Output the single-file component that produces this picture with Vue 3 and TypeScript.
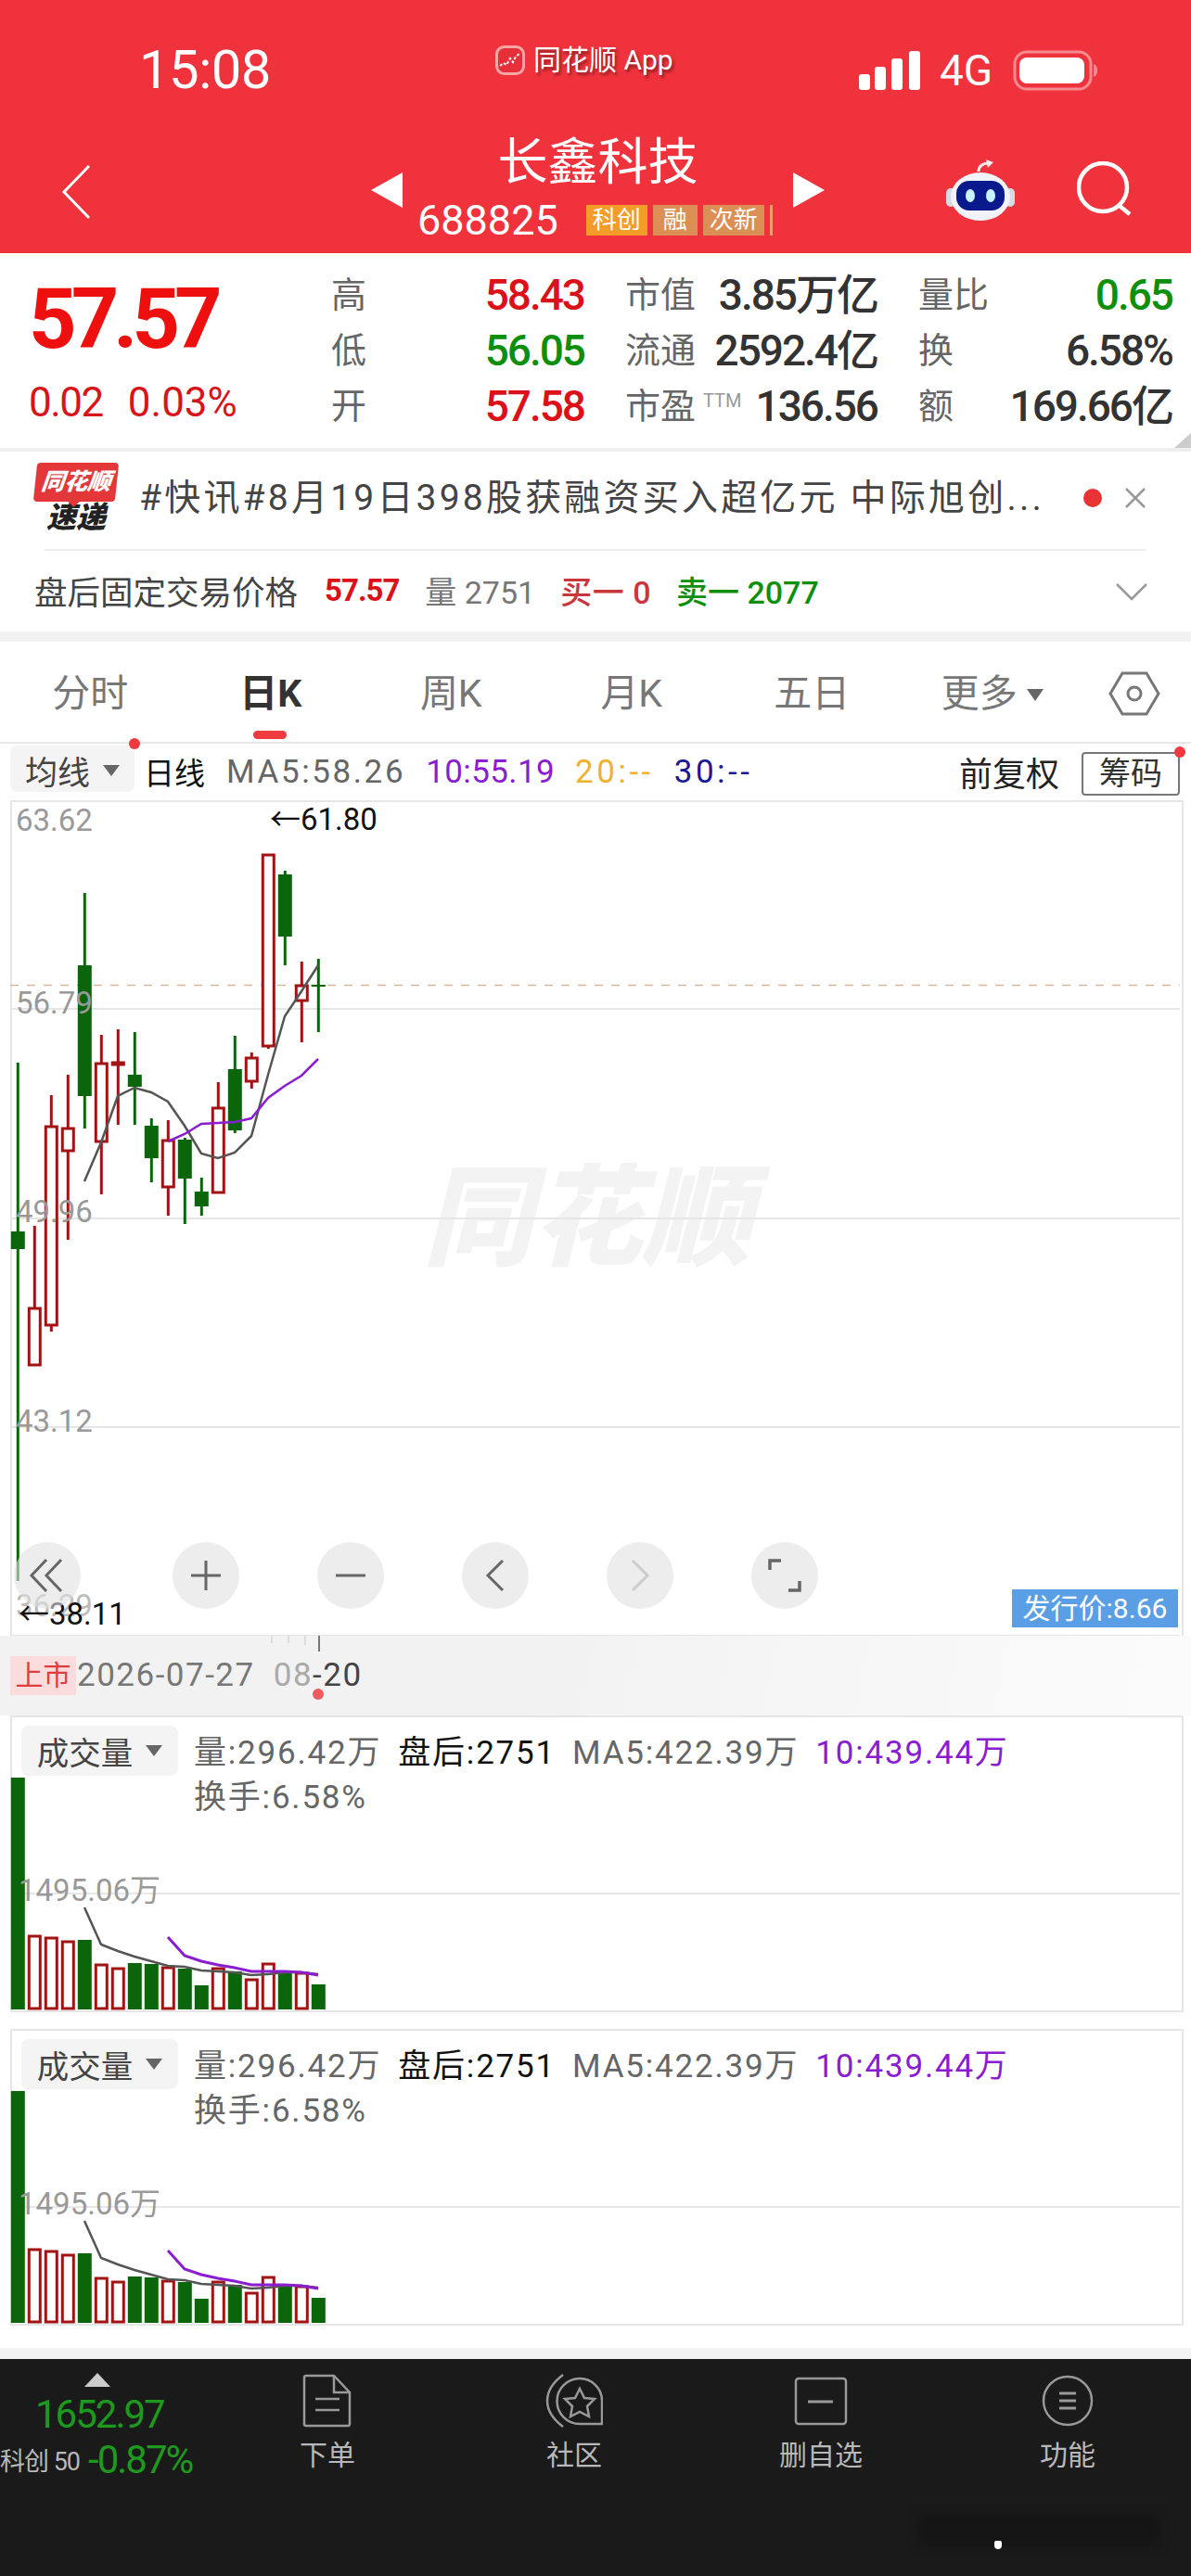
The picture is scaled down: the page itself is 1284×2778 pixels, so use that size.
<script setup lang="ts">
// K线数据（页面坐标）
interface Candle {
  x: number;
  up: boolean;
  hi: number;
  lo: number;
  top: number;
  bot: number;
}

const c = (i: number, up: boolean, hi: number, lo: number, top: number, bot: number): Candle => ({
  x: 19.3 + i * 18,
  up,
  hi,
  lo,
  top,
  bot,
});

const candles: Candle[] = [
  c(0, false, 1146, 1705, 1328, 1347),
  c(1, true, 1322, 1472, 1411, 1472),
  c(2, true, 1181, 1436, 1215, 1429),
  c(3, true, 1159, 1337, 1217, 1241),
  c(4, false, 963, 1217, 1041, 1182),
  c(5, true, 1116, 1288, 1147, 1231),
  c(6, true, 1110, 1213, 1146, 1148),
  c(7, false, 1113, 1213, 1159, 1172),
  c(8, false, 1206, 1275, 1214, 1249),
  c(9, true, 1208, 1311, 1230, 1280),
  c(10, false, 1227, 1320, 1229, 1271),
  c(11, false, 1270, 1311, 1285, 1301),
  c(12, true, 1167, 1286, 1195, 1286),
  c(13, false, 1117, 1222, 1153, 1219),
  c(14, true, 1135, 1174, 1141, 1166),
  c(15, true, 922, 1131, 922, 1128),
  c(16, false, 939, 1041, 943, 1010),
  c(17, true, 1037, 1124, 1063, 1079),
  c(18, false, 1034, 1113, 1062, 1064),
];

const ma5 = "91,1274 109,1232 127,1182 145,1173 163,1178 181,1188 199,1214 217,1244 235,1249 253,1243 271,1225 289,1159 307,1096 325,1069 343,1041";
const ma10 = "181,1231 199,1223 217,1212 235,1211 253,1210 271,1206 289,1184 307,1171 325,1160 343,1142";

const gridLines = [1088, 1314, 1539, 1764];

// 成交量
const volumes = [250, 79, 77, 73, 75, 48, 44, 50, 49, 45, 44, 26, 44, 41, 32, 49, 39, 39, 27];
const volUp = [false, true, true, true, false, true, true, false, false, true, false, false, true, false, true, true, false, true, false];
const bars = volumes.map((h, i) => ({ x: 19.3 + i * 18, h, up: volUp[i] }));
const volMa5 = "91,207 109,247 127,254 145,260 163,265 181,270 199,271 217,275 235,276 253,277 271,280 289,279 307,277 325,277 343,279";
const volMa10 = "181,239 199,259 217,265 235,269 253,272 271,276 289,276 307,276 325,277 343,280";

const panels = [0, 1];

const stats = [
  { label: "高", value: "58.43", cls: "red" },
  { label: "市值", value: "3.85万亿", cls: "dark" },
  { label: "量比", value: "0.65", cls: "green" },
  { label: "低", value: "56.05", cls: "green" },
  { label: "流通", value: "2592.4亿", cls: "dark" },
  { label: "换", value: "6.58%", cls: "dark" },
  { label: "开", value: "57.58", cls: "red" },
  { label: "市盈", sup: "TTM", value: "136.56", cls: "dark" },
  { label: "额", value: "169.66亿", cls: "dark" },
];

const tabs = ["分时", "日K", "周K", "月K", "五日"];
</script>

<template>
  <div class="page">
    <header class="head">
      <div class="status">
        <div class="time">15:08</div>
        <div class="source">
          <svg class="source-icon" width="32" height="32" viewBox="0 0 32 32">
            <rect x="1.5" y="1.5" width="29" height="29" rx="8" fill="#e5303a" stroke="#f9a5a5" stroke-width="3" />
            <path d="M5 22l4-3 3 2 4-7 3 4 3-6 4-3" fill="none" stroke="#fff" stroke-width="2" stroke-dasharray="3 2" />
          </svg>
          <span>同花顺 App</span>
        </div>
        <div class="signal">
          <svg width="68" height="44" viewBox="0 0 68 44">
            <rect x="1" y="26" width="12" height="17" rx="3" fill="#fff" />
            <rect x="18" y="18" width="12" height="25" rx="3" fill="#fff" />
            <rect x="36" y="9" width="12" height="34" rx="3" fill="#fff" />
            <rect x="55" y="1" width="12" height="42" rx="3" fill="#fff" />
          </svg>
          <span class="net">4G</span>
          <svg width="92" height="44" viewBox="0 0 92 44">
            <rect x="2" y="2" width="82" height="40" rx="13" fill="none" stroke="#f88a91" stroke-width="3" />
            <rect x="7" y="8" width="70" height="28" rx="8" fill="#fff" />
            <path d="M87 15c3 1 4 4 4 7s-1 6-4 7z" fill="#f88a91" />
          </svg>
        </div>
      </div>
      <div class="nav">
        <div class="back">
          <svg width="34" height="60" viewBox="0 0 34 60">
            <path d="M31 2L4 30l27 28" fill="none" stroke="#fff" stroke-width="3" />
          </svg>
        </div>
        <div class="stock">
          <span class="arrow arrow-l"></span>
          <div class="stock-mid">
            <div class="stock-name">长鑫科技</div>
            <div class="stock-code">
              <span class="code">688825</span>
              <span class="tag tag-o">科创</span>
              <span class="tag">融</span>
              <span class="tag tag-w">次新</span>
              <span class="tag-end"></span>
            </div>
          </div>
          <span class="arrow arrow-r"></span>
        </div>
        <div class="nav-right">
          <svg width="76" height="68" viewBox="0 0 76 68">
            <path d="M36 14c0-6 5-9 10-9" fill="none" stroke="#f5e9ea" stroke-width="3" />
            <path d="M44 1l8 3-6 6z" fill="#f5e9ea" />
            <rect x="1" y="32" width="10" height="20" rx="5" fill="#d8dbe6" />
            <rect x="65" y="32" width="10" height="20" rx="5" fill="#d8dbe6" />
            <ellipse cx="38" cy="41" rx="32" ry="26" fill="#f1f3f8" />
            <rect x="12" y="24" width="52" height="32" rx="14" fill="#0a1a8c" />
            <ellipse cx="27" cy="40" rx="5" ry="7" fill="#c7f3ff" />
            <ellipse cx="49" cy="40" rx="5" ry="7" fill="#c7f3ff" />
          </svg>
          <svg width="62" height="62" viewBox="0 0 62 62">
            <circle cx="28" cy="28" r="26" fill="none" stroke="#fff" stroke-width="4.5" />
            <path d="M46 48l11 9" fill="none" stroke="#fff" stroke-width="4.5" />
          </svg>
        </div>
      </div>
    </header>

    <section class="quote">
      <div class="price-col">
        <div class="price">57.57</div>
        <div class="change">
          <span>0.02</span>
          <span class="change-pct">0.03%</span>
        </div>
      </div>
      <div class="stat-grid">
        <div v-for="s in stats" :key="s.label" class="stat">
          <span class="stat-label">{{ s.label }}<sup v-if="s.sup">{{ s.sup }}</sup></span>
          <span class="stat-value" :class="s.cls">{{ s.value }}</span>
        </div>
      </div>
    </section>

    <section class="news">
      <div class="news-logo">
        <div class="logo-top">同花顺</div>
        <div class="logo-bot">速递</div>
      </div>
      <div class="news-text">#快讯#8月19日398股获融资买入超亿元 中际旭创...</div>
      <span class="news-dot"></span>
      <svg class="news-x" width="24" height="22" viewBox="0 0 24 22">
        <path d="M2 1l20 20M22 1L2 21" fill="none" stroke="#999" stroke-width="2.5" />
      </svg>
    </section>

    <section class="after">
      <span class="after-title">盘后固定交易价格</span>
      <span class="after-price">57.57</span>
      <span class="after-vol">量 2751</span>
      <span class="after-buy">买一 0</span>
      <span class="after-sell">卖一 2077</span>
      <svg class="after-chev" width="36" height="20" viewBox="0 0 36 20">
        <path d="M2 2l16 16L34 2" fill="none" stroke="#999" stroke-width="2.5" />
      </svg>
    </section>

    <nav class="tabs">
      <div v-for="t in tabs" :key="t" class="tab" :class="{ active: t === '日K' }">{{ t }}</div>
      <div class="tab">更多<i class="tab-tri"></i></div>
      <svg class="tab-set" width="56" height="48" viewBox="0 0 56 48">
        <path d="M2 24L15 2h26l13 22-13 22H15z" fill="none" stroke="#777" stroke-width="3" />
        <circle cx="28" cy="24" r="7" fill="none" stroke="#777" stroke-width="3" />
      </svg>
    </nav>

    <div class="chart-head">
      <div class="pick pick-dot">均线<i class="tri"></i></div>
      <span class="line-name">日线</span>
      <span class="ma grey">MA5:58.26</span>
      <span class="ma ma-ten purple">10:55.19</span>
      <span class="ma ma-dash orange">20:--</span>
      <span class="ma ma-dash navy">30:--</span>
      <span class="fq">前复权</span>
      <span class="chip">筹码</span>
    </div>

    <section class="chart">
      <svg class="canvas" width="1284" height="901" viewBox="0 863 1284 901">
        <text x="456" y="1355" class="mark">同花顺</text>
        <line v-for="y in gridLines" :key="y" x1="12" x2="1272" :y1="y" :y2="y" stroke="#e6e6e6" stroke-width="2" />
        <line x1="11" x2="1272" y1="1062.5" y2="1062.5" stroke="#d9b79c" stroke-width="1.5" stroke-dasharray="9 9" />
        <g v-for="k in candles" :key="k.x">
          <line :x1="k.x" :x2="k.x" :y1="k.hi" :y2="k.lo" :stroke="k.up ? '#a11414' : '#0b650b'" stroke-width="3" />
          <rect v-if="k.up" :x="k.x - 6" :y="k.top" width="12" :height="k.bot - k.top" fill="#fff" stroke="#a11414" stroke-width="3" />
          <rect v-else :x="k.x - 7.5" :y="k.top" width="15" :height="k.bot - k.top" fill="#0b650b" />
        </g>
        <polyline :points="ma5" fill="none" stroke="#555" stroke-width="2.5" />
        <polyline :points="ma10" fill="none" stroke="#8a1dd0" stroke-width="2.5" />
        <text x="17" y="896" class="axis-num">63.62</text>
        <text x="17" y="1093" class="axis-num">56.79</text>
        <text x="17" y="1318" class="axis-num">49.96</text>
        <text x="17" y="1544" class="axis-num">43.12</text>
        <text x="17" y="1743" class="axis-num faint">36.29</text>
        <text x="291" y="895" class="peak">←61.80</text>
        <text x="20" y="1752" class="peak">←38.11</text>
      </svg>
      <div class="tools">
        <button class="tool">
          <svg width="40" height="40" viewBox="0 0 40 40">
            <path d="M19 3L3 20l16 17M35 3L19 20l16 17" fill="none" stroke="#666" stroke-width="3" />
          </svg>
        </button>
        <button class="tool">
          <svg width="36" height="36" viewBox="0 0 36 36">
            <path d="M18 2v32M2 18h32" fill="none" stroke="#666" stroke-width="3" />
          </svg>
        </button>
        <button class="tool">
          <svg width="36" height="36" viewBox="0 0 36 36">
            <path d="M2 18h32" fill="none" stroke="#666" stroke-width="3" />
          </svg>
        </button>
        <button class="tool">
          <svg width="22" height="36" viewBox="0 0 22 36">
            <path d="M19 2L3 18l16 16" fill="none" stroke="#666" stroke-width="3" />
          </svg>
        </button>
        <button class="tool">
          <svg width="22" height="36" viewBox="0 0 22 36">
            <path d="M3 2l16 16L3 34" fill="none" stroke="#ccc" stroke-width="3" />
          </svg>
        </button>
        <button class="tool">
          <svg width="40" height="40" viewBox="0 0 40 40">
            <path d="M4 14V4h12M36 26v10H24" fill="none" stroke="#666" stroke-width="3.5" />
          </svg>
        </button>
      </div>
      <div class="issue">发行价:8.66</div>
    </section>

    <div class="axis">
      <svg class="axis-ticks" width="60" height="18" viewBox="0 0 60 18">
        <path d="M3 0v8M21 0v8M39 0v10" stroke="#ddd" stroke-width="2" />
        <path d="M54 0v17" stroke="#777" stroke-width="2" />
      </svg>
      <span class="listed">上市</span>
      <span class="date">2026-07-27</span>
      <span class="date-end"><em>08</em>-20</span>
      <span class="axis-dot"></span>
    </div>

    <section v-for="p in panels" :key="p" class="panel">
      <svg class="canvas" width="1284" height="318" viewBox="0 0 1284 318">
        <line x1="12" x2="1272" y1="192" y2="192" stroke="#e8e8e8" stroke-width="2" />
        <g v-for="b in bars" :key="b.x">
          <rect v-if="b.up" :x="b.x - 6" :y="317 - b.h" width="12" :height="b.h - 1" fill="#fff" stroke="#a11414" stroke-width="3" />
          <rect v-else :x="b.x - 7.5" :y="317 - b.h" width="15" :height="b.h" fill="#0b650b" />
        </g>
        <polyline :points="volMa5" fill="none" stroke="#555" stroke-width="2.5" />
        <polyline :points="volMa10" fill="none" stroke="#8a1dd0" stroke-width="3" />
        <text x="20" y="200" class="axis-num">1495.06万</text>
      </svg>
      <div class="panel-head">
        <div class="pick pick-vol">成交量<i class="tri"></i></div>
        <div class="vol-info">
          <div class="vol-row">
            <span class="grey">量:296.42万</span>
            <span class="black">盘后:2751</span>
            <span class="grey">MA5:422.39万</span>
            <span class="purple">10:439.44万</span>
          </div>
          <div class="vol-row">
            <span class="grey">换手:6.58%</span>
          </div>
        </div>
      </div>
    </section>

    <div class="strip"></div>

    <footer class="foot">
      <div class="index">
        <i class="index-tri"></i>
        <div class="index-num">1652.97</div>
        <div class="index-row">
          <span class="index-name">科创 50</span>
          <span class="index-pct">-0.87%</span>
        </div>
      </div>
      <div class="foot-item">
        <svg width="54" height="58" viewBox="0 0 54 58">
          <path d="M4 2h30l17 18v34a2 2 0 0 1-2 2H4a2 2 0 0 1-2-2V4a2 2 0 0 1 2-2z" fill="none" stroke="#999" stroke-width="2.5" />
          <path d="M34 2v18h17M14 27h26M14 39h26" fill="none" stroke="#999" stroke-width="2.5" />
        </svg>
        <span>下单</span>
      </div>
      <div class="foot-item">
        <svg width="62" height="58" viewBox="0 0 62 58">
          <path d="M19 1C7 10 2 20 2 29s5 19 17 28" fill="none" stroke="#999" stroke-width="2.5" />
          <path d="M37 5a24 24 0 0 1 24 24v25H37a24.500 24.500 0 0 1 0-49z" fill="none" stroke="#999" stroke-width="2.5" />
          <path d="M37 16l5 10 11 1-8 8 2 11-10-5-10 5 2-11-8-8 11-1z" fill="none" stroke="#999" stroke-width="2.5" />
        </svg>
        <span>社区</span>
      </div>
      <div class="foot-item">
        <svg width="58" height="58" viewBox="0 0 58 58">
          <rect x="2" y="5" width="54" height="49" rx="3" fill="none" stroke="#999" stroke-width="2.5" />
          <path d="M15 30h27" fill="none" stroke="#999" stroke-width="3" />
        </svg>
        <span>删自选</span>
      </div>
      <div class="foot-item">
        <svg width="56" height="58" viewBox="0 0 56 58">
          <circle cx="28" cy="29" r="26" fill="none" stroke="#999" stroke-width="2.5" />
          <path d="M19 21h18M19 29h18M19 37h18" fill="none" stroke="#999" stroke-width="3" />
        </svg>
        <span>功能</span>
      </div>
      <span class="foot-smudge"></span>
      <span class="foot-blob"></span>
    </footer>
  </div>
</template>

<style>
html,
body {
  margin: 0;
  background: #fff;
}
</style>

<style scoped>
.page {
  position: relative;
  width: 1284px;
  height: 2778px;
  overflow: hidden;
  background: #fff;
  display: flex;
  flex-direction: column;
  font-family: Roboto, "Noto Sans CJK SC", sans-serif;
  color: #333;
}

i,
em {
  font-style: normal;
}

.red { color: #dc1018; }
.green { color: #0d8f0d; }
.dark { color: #333; }
.grey { color: #666; }
.black { color: #111; }
.purple { color: #8a1dd0; }
.orange { color: #f0b030; }
.navy { color: #1a1a96; }

/* 顶部 */
.head {
  height: 273px;
  background: #ef323c;
  color: #fff;
  flex: none;
}

.status {
  height: 141px;
  display: grid;
  grid-template-columns: 534px 391px auto;
  align-items: start;
}

.time {
  padding: 42px 0 0 150px;
  font-size: 58px;
  line-height: 66px;
  letter-spacing: -0.5px;
}

.source {
  padding-top: 48px;
  display: flex;
  align-items: center;
  gap: 9px;
  font-size: 30px;
  line-height: 34px;
  text-shadow: 2px 3px 3px rgba(0, 0, 0, 0.4);
}

.signal {
  padding-top: 54px;
  display: flex;
  align-items: center;
  gap: 20px;
}

.net {
  font-size: 46px;
  line-height: 44px;
  margin-right: 2px;
}

.nav {
  height: 127px;
  display: grid;
  grid-template-columns: 400px 489px auto;
  align-items: center;
}

.back {
  padding-left: 65px;
  padding-top: 5px;
  height: 60px;
}

.stock {
  display: flex;
  align-items: center;
  justify-content: space-between;
}

.arrow {
  width: 0;
  height: 0;
  border-top: 19px solid transparent;
  border-bottom: 19px solid transparent;
}

.arrow-l { border-right: 34px solid #fff; }
.arrow-r { border-left: 34px solid #fff; }

.stock-mid {
  width: 421px;
  text-align: center;
}

.stock-name {
  font-size: 54px;
  line-height: 70px;
  margin-top: -10px;
  margin-bottom: 5px;
}

.stock-code {
  display: flex;
  align-items: center;
  padding-left: 16px;
  height: 42px;
  margin-top: 2px;
}

.code {
  font-size: 45px;
  margin-right: 30px;
}

.tag {
  height: 33px;
  line-height: 33px;
  padding: 0 1px;
  min-width: 46px;
  background: #dc8f55;
  font-size: 26px;
  margin-right: 6px;
  text-align: center;
  color: #fff;
}

.tag-o { background: #f39c27; width: 64px; }
.tag-w { width: 64px; }

.tag-end {
  width: 3px;
  height: 33px;
  background: #f39c60;
}

.nav-right {
  padding-left: 130px;
  display: flex;
  align-items: center;
  gap: 66px;
}

/* 报价 */
.quote {
  height: 210px;
  flex: none;
  display: flex;
  position: relative;
}

.quote::after {
  content: "";
  position: absolute;
  right: 0;
  bottom: 0;
  border-left: 18px solid transparent;
  border-bottom: 16px solid #ccc;
}

.price-col {
  width: 357px;
  padding: 22px 0 0 31px;
  box-sizing: border-box;
}

.price {
  font-size: 90px;
  line-height: 100px;
  font-weight: 700;
  letter-spacing: -6px;
  color: #ee0f0f;
}

.change {
  margin-top: 14px;
  display: flex;
  gap: 27px;
  font-size: 44px;
  line-height: 50px;
  letter-spacing: -1.5px;
  color: #d7141a;
}

.change-pct {
  letter-spacing: 0;
}

.stat-grid {
  width: 907px;
  padding-top: 15px;
  display: grid;
  grid-template-columns: 273px 272px 274px;
  column-gap: 44px;
  grid-auto-rows: 60px;
  align-items: center;
}

.stat {
  display: flex;
  justify-content: space-between;
  align-items: center;
}

.stat-label {
  font-size: 38px;
  line-height: 50px;
  color: #666;
  white-space: nowrap;
}

.stat-label sup {
  font-size: 20px;
  margin-left: 8px;
  color: #999;
  vertical-align: 12px;
  line-height: 0;
}

.stat-value {
  font-size: 46px;
  line-height: 50px;
  font-weight: 500;
  letter-spacing: -2px;
  white-space: nowrap;
}

/* 快讯 */
.news {
  height: 105px;
  flex: none;
  border-top: 4px solid #eee;
  display: flex;
  align-items: center;
  position: relative;
}

.news-logo {
  width: 88px;
  margin-left: 38px;
  margin-right: 24px;
  text-align: center;
  margin-top: -6px;
}

.logo-top {
  height: 42px;
  line-height: 42px;
  background: #e3373a;
  color: #fff;
  font-size: 25px;
  font-weight: 900;
  font-style: italic;
  border-radius: 4px;
  transform: skewX(-6deg);
  white-space: nowrap;
  position: relative;
}

.logo-top::after {
  content: "";
  position: absolute;
  left: 38px;
  bottom: -6px;
  border-left: 6px solid transparent;
  border-right: 6px solid transparent;
  border-top: 6px solid #e3373a;
}

.logo-bot {
  font-size: 32px;
  line-height: 34px;
  font-weight: 900;
  font-style: italic;
  color: #222;
}

.news-text {
  width: 1006px;
  font-size: 39px;
  line-height: 50px;
  margin-top: -6px;
  letter-spacing: 3.2px;
  color: #444;
  white-space: nowrap;
}

.news-dot {
  position: absolute;
  left: 1168px;
  top: 40px;
  width: 20px;
  height: 20px;
  border-radius: 50%;
  background: #e73336;
}

.news-x {
  position: absolute;
  left: 1212px;
  top: 39px;
}

.after {
  height: 89px;
  flex: none;
  display: flex;
  align-items: center;
  padding-left: 37px;
  position: relative;
  font-size: 35px;
  white-space: nowrap;
}

.after::before {
  content: "";
  position: absolute;
  left: 48px;
  right: 48px;
  top: 0;
  height: 2px;
  background: #eee;
}

.after-title {
  color: #444;
  font-size: 35.5px;
  margin-right: 29px;
}

.after-price {
  color: #dc1018;
  font-weight: 700;
  font-size: 33px;
  letter-spacing: -1px;
  margin-right: 28px;
}

.after-vol {
  color: #777;
  font-size: 34px;
  margin-right: 27px;
}

.after-buy {
  color: #c9363c;
  font-size: 34px;
  font-weight: 500;
  letter-spacing: 0.5px;
  margin-right: 27px;
}

.after-sell {
  color: #0d8f0d;
  font-size: 34px;
  font-weight: 500;
}

.after-chev {
  position: absolute;
  left: 1202px;
  top: 36px;
}

/* 周期 */
.tabs {
  flex: none;
  height: 108px;
  border-top: 11px solid #f2f2f2;
  border-bottom: 2px solid #e8e8e8;
  display: flex;
  align-items: center;
  position: relative;
}

.tab {
  width: 194.5px;
  text-align: center;
  font-size: 41px;
  line-height: 50px;
  color: #777;
  position: relative;
  margin-top: 4px;
}

.tab.active {
  color: #333;
  font-weight: 700;
}

.tab.active::after {
  content: "";
  position: absolute;
  left: 78px;
  top: 65px;
  width: 36px;
  height: 9px;
  border-radius: 5px;
  background: #ef3b3f;
}

.tab-tri {
  display: inline-block;
  margin-left: 10px;
  border-left: 9px solid transparent;
  border-right: 9px solid transparent;
  border-top: 13px solid #666;
  vertical-align: 6px;
}

.tab-set {
  margin-left: 28px;
  margin-top: 4px;
}

/* 图表头 */
.chart-head {
  flex: none;
  height: 61px;
  display: flex;
  align-items: center;
  padding-left: 11px;
  position: relative;
  white-space: nowrap;
}

.pick {
  background: #f4f4f4;
  border-radius: 8px;
  color: #444;
  font-size: 35px;
  display: flex;
  align-items: center;
  justify-content: center;
  box-sizing: border-box;
  position: relative;
}

.pick-dot {
  width: 134px;
  height: 50px;
  margin-right: 10px;
  margin-top: -7px;
  padding-top: 3px;
}

.pick-dot::after,
.chip::after {
  content: "";
  position: absolute;
  width: 12px;
  height: 12px;
  border-radius: 50%;
  background: #f03a3f;
}

.pick-dot::after {
  right: -6px;
  top: -8px;
}

.tri {
  margin-left: 14px;
  border-left: 9px solid transparent;
  border-right: 9px solid transparent;
  border-top: 12px solid #666;
}

.line-name {
  font-size: 33px;
  color: #111;
  margin-right: 23px;
  margin-top: -1px;
}

.ma {
  font-size: 35px;
  margin-right: 22px;
  margin-top: -1px;
  letter-spacing: 2.6px;
}

.ma-ten {
  letter-spacing: 0.4px;
}

.ma-dash {
  letter-spacing: 3.5px;
}

.fq {
  position: absolute;
  left: 1034px;
  top: 9px;
  font-size: 36px;
  line-height: 50px;
  color: #222;
}

.chip {
  position: absolute;
  left: 1166px;
  top: 9px;
  width: 106px;
  height: 47px;
  box-sizing: border-box;
  border: 2px solid #777;
  border-radius: 4px;
  text-align: center;
  font-size: 34px;
  line-height: 42px;
  color: #333;
}

.chip::after {
  right: -8px;
  top: -8px;
}

/* K线 */
.chart {
  flex: none;
  height: 901px;
  position: relative;
}

.chart::before {
  content: "";
  position: absolute;
  left: 11px;
  top: 0;
  width: 1261px;
  height: 899px;
  border: 2px solid #e6e6e6;
}

.canvas {
  position: absolute;
  left: 0;
  top: 0;
}

.mark {
  font-size: 118px;
  font-weight: 900;
  font-style: italic;
  fill: #f3f3f3;
}

.axis-num {
  font-size: 33px;
  fill: #999;
}

.axis-num.faint {
  fill: #bbb;
}

.peak {
  font-size: 33px;
  fill: #111;
}

.tools {
  position: absolute;
  left: 15px;
  top: 800px;
  display: flex;
  gap: 84px;
}

.tool {
  width: 72px;
  height: 72px;
  padding: 0;
  border: 0;
  border-radius: 50%;
  background: rgba(225, 225, 225, 0.6);
  display: flex;
  align-items: center;
  justify-content: center;
}

.tool:first-child {
  margin-right: 15px;
}

.issue {
  position: absolute;
  left: 1091px;
  top: 851px;
  width: 179px;
  height: 41px;
  background: #5a9fe6;
  color: #fff;
  text-align: center;
  font-size: 30px;
  line-height: 41px;
}

/* 时间轴 */
.axis {
  flex: none;
  height: 86px;
  background: linear-gradient(100deg, #f2f2f2 45%, #fbfbfb);
  position: relative;
  display: flex;
  align-items: center;
  padding-left: 11px;
}

.axis-ticks {
  position: absolute;
  left: 290px;
  top: 0;
}

.listed {
  width: 71px;
  height: 42px;
  background: #fbdcdc;
  color: #e03c3c;
  font-size: 30px;
  line-height: 42px;
  text-align: center;
}

.date {
  font-size: 35px;
  line-height: 42px;
  color: #777;
  margin-left: 1px;
  letter-spacing: 1.5px;
}

.date-end {
  font-size: 35px;
  line-height: 42px;
  margin-left: 20px;
  letter-spacing: 1.5px;
  color: #444;
}

.date-end em {
  color: #aaa;
}

.axis-dot {
  position: absolute;
  left: 337px;
  top: 57px;
  width: 12px;
  height: 12px;
  border-radius: 50%;
  background: #ef5a5f;
}

/* 成交量 */
.panel {
  flex: none;
  height: 318px;
  margin-bottom: 20px;
  position: relative;
}

.panel::before {
  content: "";
  position: absolute;
  left: 11px;
  top: 0;
  width: 1261px;
  height: 316px;
  border: 2px solid #e6e6e6;
}

.panel-head {
  position: relative;
  padding: 11px 0 0 23px;
  display: flex;
  white-space: nowrap;
}

.pick-vol {
  width: 169px;
  height: 54px;
  margin-right: 17px;
  font-size: 34.5px;
}

.vol-info {
  font-size: 35px;
  line-height: 48px;
  margin-top: 6px;
}

.vol-row {
  display: flex;
  gap: 18px;
  letter-spacing: 1.8px;
}

.strip {
  flex: none;
  height: 12px;
  margin-top: 6px;
  background: #f3f3f3;
}

/* 底栏 */
.foot {
  flex: 1;
  background: #1a1a1a;
  display: grid;
  grid-template-columns: 220px repeat(4, 266px);
  align-items: start;
  position: relative;
  color: #b8b8b8;
}

.index {
  padding-top: 15px;
  white-space: nowrap;
}

.index-tri {
  display: block;
  width: 0;
  margin-left: 91px;
  border-left: 14px solid transparent;
  border-right: 14px solid transparent;
  border-bottom: 15px solid #ccc;
}

.index-num {
  margin: 7px 0 0 38px;
  font-size: 42px;
  line-height: 46px;
  letter-spacing: -2px;
  color: #1d9a1d;
}

.index-row {
  display: flex;
  align-items: center;
  margin-top: 1px;
  gap: 9px;
}

.index-name {
  font-size: 27px;
  line-height: 46px;
  margin-top: 4px;
  letter-spacing: -1px;
}

.index-pct {
  font-size: 42px;
  line-height: 46px;
  letter-spacing: -2px;
  color: #1d9a1d;
}

.foot-item {
  padding-top: 16px;
  display: flex;
  flex-direction: column;
  align-items: center;
  font-size: 30px;
  line-height: 34px;
  white-space: nowrap;
}

.foot-item span {
  margin-top: 13px;
}

.foot-smudge {
  position: absolute;
  left: 990px;
  top: 168px;
  width: 260px;
  height: 34px;
  background: #151515;
  filter: blur(5px);
}

.foot-blob {
  position: absolute;
  left: 1072px;
  top: 196px;
  width: 8px;
  height: 9px;
  border-radius: 2px 2px 4px 4px;
  background: #fff;
}
</style>
